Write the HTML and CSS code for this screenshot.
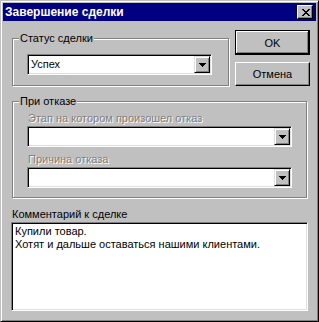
FILE: index.html
```html
<!DOCTYPE html>
<html lang="ru">
<head>
    <meta charset="UTF-8">
    <title>Завершение сделки</title>
    <link rel="stylesheet" href="styles.css">
</head>
<body>
    <div class="window">
        <div class="titlebar">
            <span class="title">Завершение сделки</span>
            <button class="close-btn" type="button">
                <svg width="8" height="7" viewBox="0 0 8 7">
                    <path d="M0 0h2v1h-2z M6 0h2v1h-2z M1 1h2v1h-2z M5 1h2v1h-2z M2 2h4v1h-4z M3 3h2v1h-2z M2 4h4v1h-4z M1 5h2v1h-2z M5 5h2v1h-2z M0 6h2v1h-2z M6 6h2v1h-2z" fill="#000"/>
                </svg>
            </button>
        </div>

        <div class="dialog-body">
            <div class="top-row">
                <fieldset class="group group-status">
                    <legend>Статус сделки</legend>
                    <div class="combo">
                        <span class="combo-value">Успех</span>
                        <span class="combo-btn">
                            <svg width="7" height="4" viewBox="0 0 7 4"><path d="M0 0h7v1h-1v1h-1v1h-1v1h-1v-1h-1v-1h-1v-1h-1z" fill="#000"/></svg>
                        </span>
                    </div>
                </fieldset>

                <div class="buttons">
                    <button class="btn btn-default" type="button">OK</button>
                    <button class="btn" type="button">Отмена</button>
                </div>
            </div>

            <fieldset class="group group-reject">
                <legend>При отказе</legend>
                <div class="field-label disabled">Этап на котором произошел отказ</div>
                <div class="combo">
                    <span class="combo-value"></span>
                    <span class="combo-btn">
                        <svg width="7" height="4" viewBox="0 0 7 4"><path d="M0 0h7v1h-1v1h-1v1h-1v1h-1v-1h-1v-1h-1v-1h-1z" fill="#000"/></svg>
                    </span>
                </div>
                <div class="field-label disabled second">Причина отказа</div>
                <div class="combo">
                    <span class="combo-value"></span>
                    <span class="combo-btn">
                        <svg width="7" height="4" viewBox="0 0 7 4"><path d="M0 0h7v1h-1v1h-1v1h-1v1h-1v-1h-1v-1h-1v-1h-1z" fill="#000"/></svg>
                    </span>
                </div>
            </fieldset>

            <div class="memo-label">Комментарий к сделке</div>
            <div class="memo">Купили товар.<br>Хотят и дальше оставаться нашими клиентами.</div>
        </div>
    </div>
</body>
</html>
```

FILE: styles.css
```css
* {
    margin: 0;
    padding: 0;
    box-sizing: border-box;
}

body {
    font-family: 'Liberation Sans', Arial, sans-serif;
    font-size: 11px;
    line-height: 13px;
    color: #000;
    background: #c0c0c0;
}

.window {
    width: 319px;
    height: 322px;
    background: #c0c0c0;
    border: 1px solid;
    border-color: #c0c0c0 #000 #000 #c0c0c0;
    box-shadow: inset 1px 1px 0 #fff, inset -1px -1px 0 #808080;
    padding: 2px;
}

.titlebar {
    height: 18px;
    background: #000080;
    display: flex;
    align-items: center;
    justify-content: space-between;
    padding: 0 3px 0 2px;
}

.title {
    color: #fff;
    font-weight: bold;
    font-size: 12px;
}

.close-btn {
    width: 16px;
    height: 14px;
    background: #c0c0c0;
    border: 1px solid;
    border-color: #fff #000 #000 #fff;
    box-shadow: inset -1px -1px 0 #808080;
    display: flex;
    align-items: center;
    justify-content: center;
    padding-left: 1px;
}

.close-btn svg {
    display: block;
}

.dialog-body {
    padding: 9px 0 0 8px;
}

.top-row {
    display: flex;
    align-items: flex-start;
}

/* etched group box */
.group {
    border: 1px solid #808080;
    box-shadow: 1px 1px 0 #fff, inset 1px 1px 0 #fff;
    min-width: 0;
    margin-left: 1px;
}

.group legend {
    margin-left: 6px;
    padding: 0 1px;
    background: #c0c0c0;
    line-height: 13px;
}

.group-status {
    width: 217px;
    margin-top: 2px;
}

.group-status .combo {
    margin: 9px 16px 10px 14px;
}

.group-reject {
    width: 295px;
    margin-top: 9px;
}

.group-reject .combo {
    margin: 1px 14px 0 14px;
}

.group-reject .combo:last-child {
    margin-bottom: 9px;
}

.field-label {
    padding-left: 15px;
    margin-top: 4px;
}

.field-label.second {
    margin-top: 6px;
}

.field-label.disabled {
    color: #808080;
    text-shadow: 1px 1px 0 #fff;
}

.combo {
    height: 21px;
    background: #fff;
    border: 1px solid;
    border-color: #808080 #fff #fff #808080;
    box-shadow: inset 1px 1px 0 #000, inset -1px -1px 0 #dfdfdf;
    padding: 1px;
    display: flex;
    align-items: center;
}

.combo-value {
    flex: 1;
    padding-left: 2px;
}

.combo-btn {
    width: 16px;
    height: 17px;
    background: #c0c0c0;
    border: 1px solid;
    border-color: #dfdfdf #000 #000 #dfdfdf;
    box-shadow: inset 1px 1px 0 #fff, inset -1px -1px 0 #808080;
    display: flex;
    align-items: center;
    justify-content: center;
}

.combo-btn svg {
    display: block;
}

.buttons {
    display: flex;
    flex-direction: column;
    gap: 7px;
    margin-left: 6px;
}

.btn {
    width: 75px;
    height: 24px;
    font-family: inherit;
    font-size: 11px;
    color: #000;
    background: #c0c0c0;
    border: 1px solid;
    border-color: #fff #000 #000 #fff;
    box-shadow: inset -1px -1px 0 #808080;
}

.btn-default {
    height: 25px;
    border-color: #000;
    box-shadow: inset -1px -1px 0 #000, inset 1px 1px 0 #fff, inset -2px -2px 0 #808080;
}

.memo-label {
    margin: 10px 0 1px 1px;
}

.memo {
    width: 297px;
    height: 89px;
    background: #fff;
    border: 1px solid;
    border-color: #808080 #fff #fff #808080;
    box-shadow: inset 1px 1px 0 #000, inset -1px -1px 0 #dfdfdf;
    padding: 2px 3px;
}
```
